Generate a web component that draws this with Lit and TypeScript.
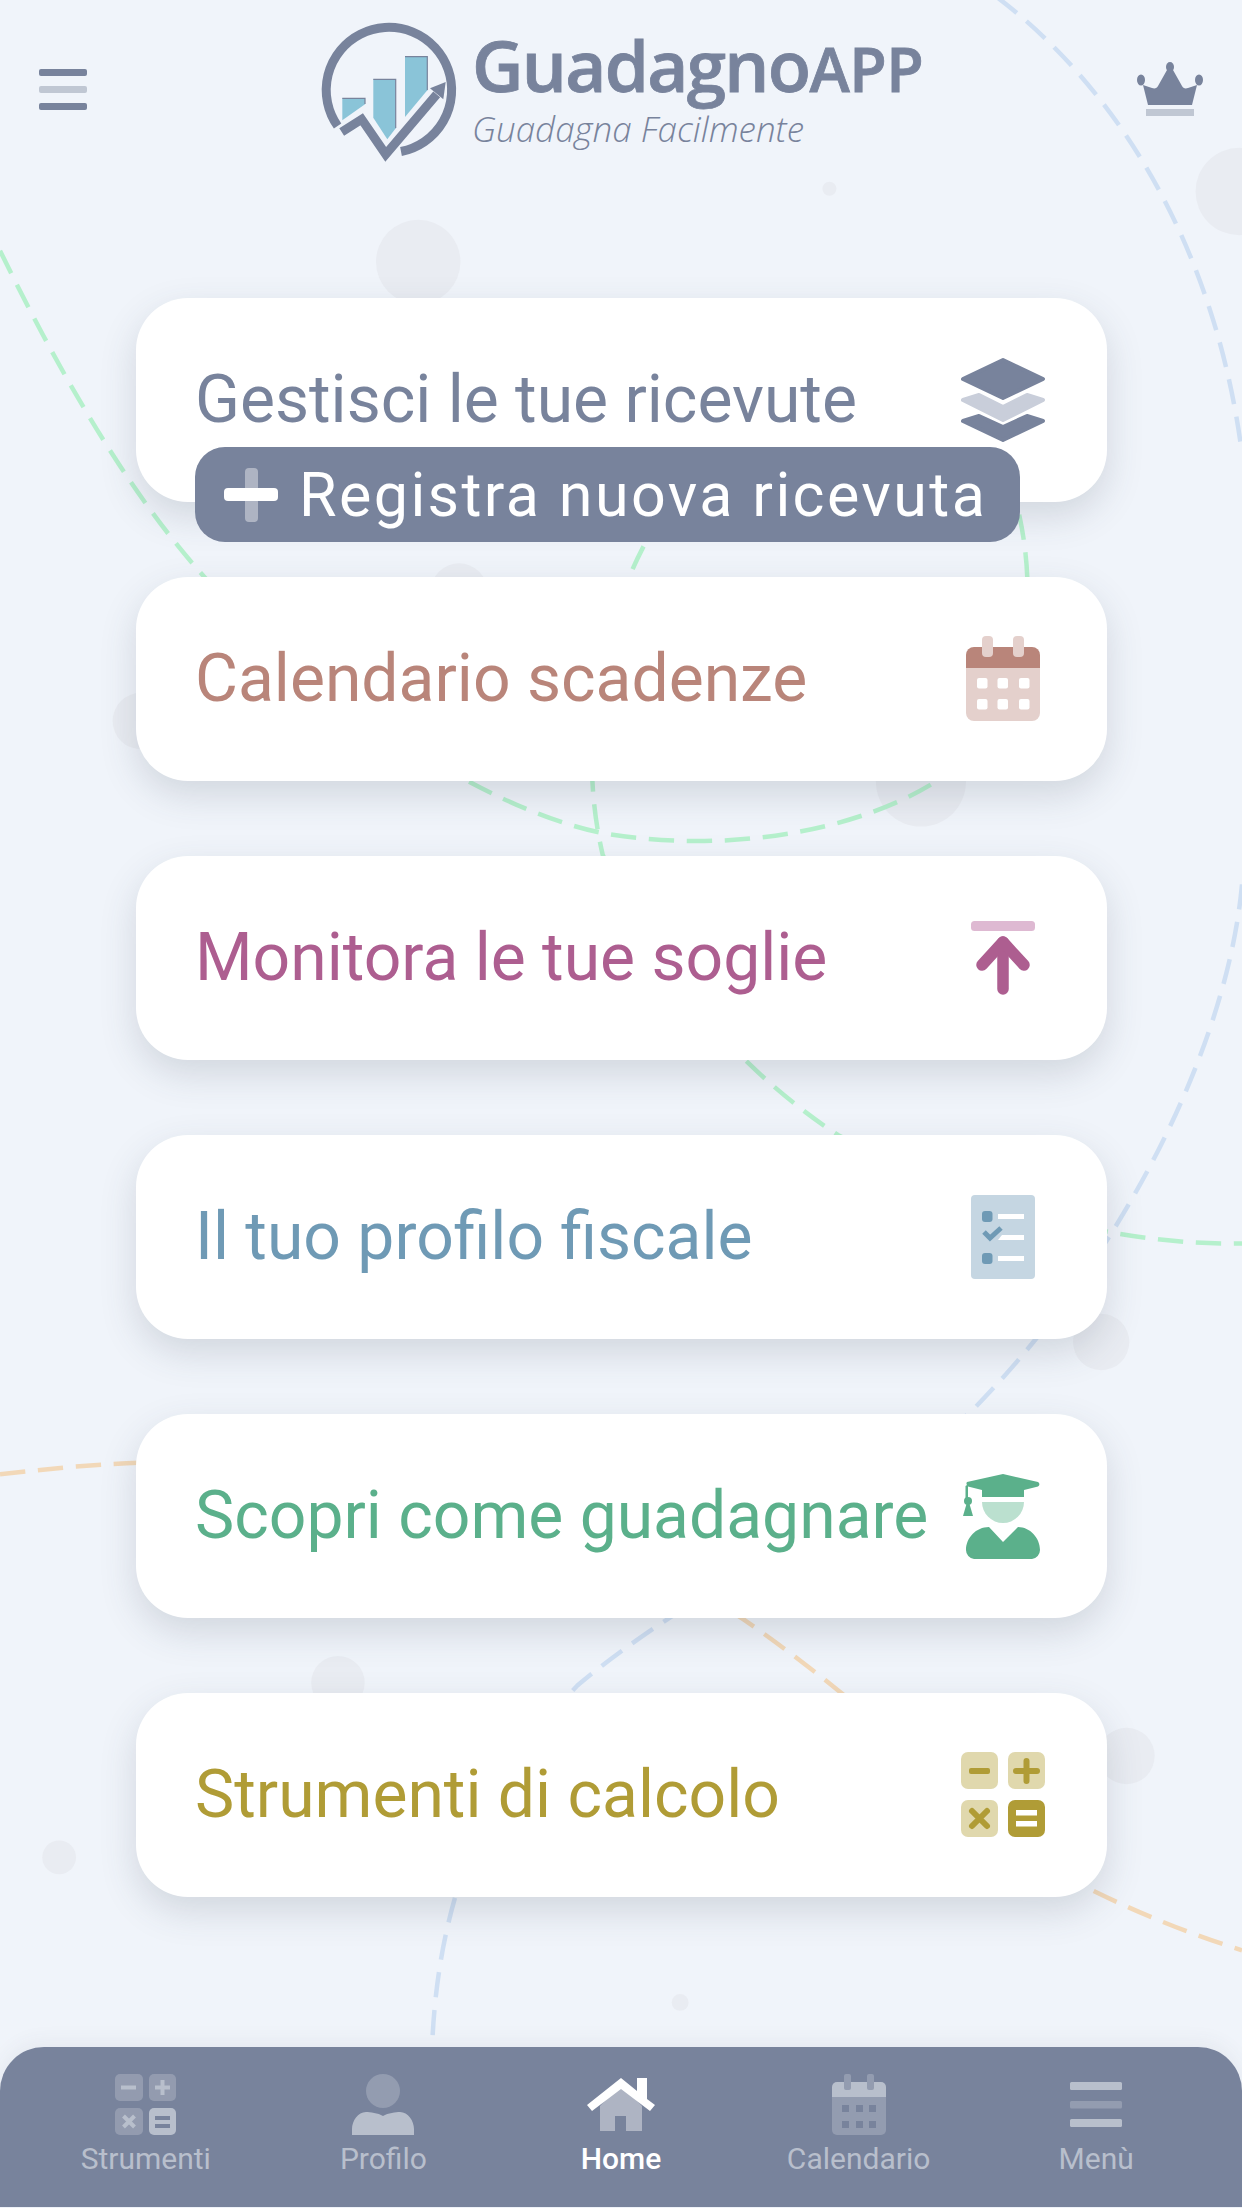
import { LitElement, html, css, svg } from "lit";
import { customElement } from "lit/decorators.js";

const BAR = "#78839c";

// each icon sits in a 90x90 box centred on the card's right side
const layersIcon = svg`
  <g stroke-width="4" stroke-linejoin="round">
    <path d="M45 5 85 24 45 43 5 24Z" fill="#78839c" stroke="#78839c"/>
    <path d="M21 40 45 52 69 40 85 45 45 65 5 45Z" fill="#c9ceda" stroke="#c9ceda"/>
    <path d="M21 61 45 72 69 61 85 66 45 85 5 66Z" fill="#78839c" stroke="#78839c"/>
  </g>
`;

const calendarIcon = svg`
  <path d="M8 30H82V79a8 8 0 0 1-8 8H16a8 8 0 0 1-8-8Z" fill="#e4d0cc"/>
  <path d="M16 13H74a8 8 0 0 1 8 8V34H8V21a8 8 0 0 1 8-8Z" fill="#b9857a"/>
  <rect x="24" y="2" width="11" height="21" rx="4" fill="#e4d0cc"/>
  <rect x="55" y="2" width="11" height="21" rx="4" fill="#e4d0cc"/>
  ${[19, 39.5, 61].flatMap((x) =>
    [44, 65].map((y) => svg`<rect x=${x} y=${y} width="10.5" height="10.5" rx="2" fill="#fff"/>`)
  )}
`;

const thresholdIcon = svg`
  <rect x="13" y="8" width="64" height="10" rx="3.5" fill="#deb9d2"/>
  <path d="M45 29V76" stroke="#ad5e90" stroke-width="11.5" stroke-linecap="round" fill="none"/>
  <path d="M24 52 45 29 66 52" stroke="#ad5e90" stroke-width="11.5" stroke-linecap="round" stroke-linejoin="round" fill="none"/>
`;

const profileIcon = svg`
  <rect x="13" y="3" width="64" height="84" rx="4" fill="#c5d6e2"/>
  <rect x="24" y="19" width="10.5" height="11" rx="3" fill="#6f9ab5"/>
  <rect x="40" y="22" width="26" height="5" fill="#fff"/>
  <path d="M44 43H66V48H40Z" fill="#fff"/>
  <path d="M26 40 32 46 43 36" stroke="#6f9ab5" stroke-width="5" fill="none"/>
  <rect x="24" y="61" width="10.5" height="11" rx="3" fill="#6f9ab5"/>
  <rect x="40" y="64" width="26" height="5" fill="#fff"/>
`;

const graduateIcon = svg`
  <path d="M45 3 80 11a2.5 2.5 0 0 1 0 4.500L66 19V26H24V19L10 15.500V30H7.500V15L9 14a2.500 2.500 0 0 1 0-3Z" fill="#5bb08b"/>
  <path d="M24 31H66A21 21 0 0 1 24 31Z" fill="#bbe0cf"/>
  <circle cx="10" cy="30" r="4" fill="#5bb08b"/>
  <path d="M8.500 33H11.500L15 45H5Z" fill="#5bb08b"/>
  <path d="M31 56 45 71 60 56C72 56 82 67 82 79A9 9 0 0 1 74 88H16A9 9 0 0 1 8 79C8 67 18 56 31 56Z" fill="#5bb08b"/>
`;

const calcIcon = svg`
  <rect x="3" y="2" width="37" height="37" rx="7" fill="#e0d8ad"/>
  <rect x="50" y="2" width="37" height="37" rx="7" fill="#e0d8ad"/>
  <rect x="3" y="50" width="37" height="37" rx="7" fill="#e0d8ad"/>
  <rect x="50" y="50" width="37" height="37" rx="7" fill="#b09c36"/>
  <rect x="11" y="18" width="21" height="6" rx="2" fill="#b09c36"/>
  <path d="M58 21H79M68.500 11V31" stroke="#b09c36" stroke-width="6" stroke-linecap="round"/>
  <path d="M14 61 29 76M29 61 14 76" stroke="#b09c36" stroke-width="6" stroke-linecap="round"/>
  <rect x="58" y="60" width="21" height="5.500" fill="#fff"/>
  <rect x="58" y="71" width="21" height="5.500" fill="#fff"/>
`;

const navCalc = svg`
  <rect x="0" y="0" width="28" height="27" rx="5" fill="#fff" opacity=".2"/>
  <rect x="34" y="0" width="27" height="27" rx="5" fill="#fff" opacity=".2"/>
  <rect x="0" y="34" width="28" height="27" rx="5" fill="#fff" opacity=".2"/>
  <rect x="34" y="34" width="27" height="27" rx="5" fill="#b8bfcc"/>
  <rect x="6" y="11.500" width="15" height="4" fill="#b8bfcc"/>
  <path d="M40 13.500H55M47.500 6V21" stroke="#b8bfcc" stroke-width="4"/>
  <path d="M8.500 42 19.500 53M19.500 42 8.500 53" stroke="#b8bfcc" stroke-width="4"/>
  <rect x="40" y="42" width="15" height="4" fill="${BAR}"/>
  <rect x="40" y="50" width="15" height="4" fill="${BAR}"/>
`;

const navProfile = svg`
  <circle cx="31" cy="17" r="17" fill="#939cb0"/>
  <path d="M14 38C18 38 26 39 31 42 36 39 44 38 48 38 56 38 62 47 62 55V61H0V55C0 47 6 38 14 38Z" fill="#b8bfcc"/>
`;

const navHome = svg`
  <path d="M31 10 10 32V57H25V42H36V57H52V32Z" fill="#fff" opacity=".4"/>
  <path d="M-3 31 31 4 47 17V4H57V25L65 31 60 37 31 15 2 37Z" fill="#fff"/>
`;

const navCalendar = svg`
  <path d="M4 20H58V56a5 5 0 0 1-5 5H9a5 5 0 0 1-5-5Z" fill="#939cb0"/>
  <path d="M9 8H53a5 5 0 0 1 5 5V23H4V13a5 5 0 0 1 5-5Z" fill="#b8bfcc"/>
  <rect x="16" y="0" width="7" height="16" rx="2" fill="#939cb0"/>
  <rect x="39" y="0" width="7" height="16" rx="2" fill="#939cb0"/>
  ${[14, 28, 41].flatMap((x) =>
    [31, 47].map((y) => svg`<rect x=${x} y=${y} width="7" height="7" fill=${BAR}/>`)
  )}
`;

const navMenu = svg`
  <rect x="5" y="8" width="52" height="8" rx="1.500" fill="#b8bfcc"/>
  <rect x="5" y="27" width="52" height="7.500" rx="1.500" fill="#939cb0"/>
  <rect x="5" y="45" width="52" height="8" rx="1.500" fill="#b8bfcc"/>
`;

const CARDS = [
  { label: "Gestisci le tue ricevute", color: "#78839c", icon: layersIcon },
  { label: "Calendario scadenze", color: "#b9857a", icon: calendarIcon },
  { label: "Monitora le tue soglie", color: "#ad5e90", icon: thresholdIcon },
  { label: "Il tuo profilo fiscale", color: "#6f9ab5", icon: profileIcon },
  { label: "Scopri come guadagnare", color: "#5bb08b", icon: graduateIcon },
  { label: "Strumenti di calcolo", color: "#b09c36", icon: calcIcon },
];

const NAV = [
  { label: "Strumenti", icon: navCalc, active: false },
  { label: "Profilo", icon: navProfile, active: false },
  { label: "Home", icon: navHome, active: true },
  { label: "Calendario", icon: navCalendar, active: false },
  { label: "Menù", icon: navMenu, active: false },
];

// [cx, cy, r] in the 882 wide backdrop
const BLOBS = [
  [297, 186, 30], [880, 136, 31], [589, 134, 5], [326, 420, 20], [100, 512, 20],
  [654, 555, 32], [782, 953, 20], [240, 1195, 19], [800, 1247, 20], [42, 1319, 12], [483, 1422, 6],
];

const ARCS = [
  { d: "M708 -2C790 60 862 170 882 322", color: "#cfdff3" },
  { d: "M882 628C872 740 800 890 690 1002C600 1080 490 1130 410 1197C350 1260 312 1340 307 1450", color: "#cfdff3" },
  { d: "M0 178C40 260 88 345 141 405C210 485 340 575 430 592C540 610 650 580 695 530C735 480 735 410 722 358", color: "#b5f0cc" },
  { d: "M457 388C425 450 410 530 428 607C465 690 525 760 595 806C680 850 780 885 882 883", color: "#b5f0cc" },
  { d: "M0 1047C60 1040 110 1036 170 1040C330 1050 453 1100 528 1150C615 1210 690 1285 765 1337C810 1360 850 1375 882 1385", color: "#f2d8b8" },
];

@customElement("app-root")
export class AppRoot extends LitElement {
  static styles = css`
    :host {
      display: flex;
      flex-direction: column;
      position: relative;
      width: 1242px;
      height: 2208px;
      overflow: hidden;
      background: #f0f4fa;
      font-family: Roboto, "Liberation Sans", sans-serif;
    }

    .backdrop {
      position: absolute;
      inset: 0;
      width: 1242px;
      height: 2208px;
    }

    header,
    main,
    nav {
      position: relative;
    }

    header {
      display: flex;
      align-items: center;
      height: 178px;
      padding: 0 37px 0 39px;
    }

    .menu {
      display: flex;
      flex-direction: column;
      gap: 10px;
      width: 48px;
    }

    .menu span {
      height: 7px;
      border-radius: 2px;
      background: #78839c;
    }

    .menu span:nth-child(2) {
      background: #c0c7d3;
    }

    .logo {
      display: flex;
      align-items: center;
      gap: 12px;
      margin-left: 233px;
      flex: 1;
    }

    .logo svg {
      width: 140px;
      height: 145px;
      margin-top: 8px;
    }

    .brand {
      color: #78839c;
      font-family: "Open Sans", sans-serif;
      margin-top: -8px;
    }

    .name {
      font-size: 71px;
      font-weight: 600;
      line-height: 84px;
      letter-spacing: -1.7px;
      -webkit-text-stroke: 0.8px #78839c;
    }

    .name span {
      font-size: 61px;
      letter-spacing: -0.5px;
    }

    .tag {
      font-size: 35px;
      font-style: italic;
      font-weight: 300;
      line-height: 36px;
    }

    .crown {
      width: 70px;
      height: 60px;
    }

    main {
      flex: 1;
      display: flex;
      flex-direction: column;
      gap: 75px;
      padding: 120px 135px 0 136px;
    }

    .card {
      position: relative;
      display: flex;
      align-items: center;
      justify-content: space-between;
      height: 204px;
      padding: 0 59px;
      border-radius: 52px;
      background: #fff;
      box-shadow: 0 14px 36px rgba(60, 70, 90, 0.17);
      font-size: 66px;
    }

    .label {
      margin-top: -1px;
    }

    .card svg {
      width: 90px;
      height: 90px;
      overflow: visible;
      flex: none;
    }

    .add {
      position: absolute;
      left: 59px;
      top: 149px;
      display: flex;
      align-items: center;
      gap: 21px;
      width: 825px;
      height: 95px;
      box-sizing: border-box;
      padding-left: 29px;
      border-radius: 30px;
      background: #78839c;
      color: #fff;
      font-size: 61px;
      letter-spacing: 2.4px;
    }

    .add svg {
      width: 54px;
      height: 54px;
    }

    nav {
      display: flex;
      height: 160px;
      margin-bottom: 1px;
      padding: 27px 27px 0;
      box-sizing: border-box;
      border-radius: 44px 44px 0 0;
      background: #78839c;
      box-shadow: 0 -6px 20px rgba(60, 70, 90, 0.06);
    }

    .tab {
      flex: 1;
      display: flex;
      flex-direction: column;
      align-items: center;
      gap: 8px;
      color: #b8bfcc;
      font-size: 30px;
      line-height: 32px;
    }

    .tab.active {
      color: #fff;
      font-weight: 500;
    }

    .tab svg {
      width: 62px;
      height: 61px;
      overflow: visible;
    }
  `;

  private renderBackdrop() {
    return html`
      <svg class="backdrop" viewBox="0 0 882 1568" fill="none">
        ${BLOBS.map(([cx, cy, r]) => svg`<circle cx=${cx} cy=${cy} r=${r} fill="#e9ecf2"/>`)}
        ${ARCS.map(
          (a) => svg`<path d=${a.d} stroke=${a.color} stroke-width="3.2" stroke-dasharray="18 9"/>`
        )}
      </svg>
    `;
  }

  private renderLogo() {
    return html`
      <div class="logo">
        <svg viewBox="320 20 140 145" fill="none">
          <path d="M337.600 125A62.700 62.700 0 1 1 401 150.500" stroke="#78839c" stroke-width="9"/>
          <path d="M341.700 131 361.700 118.300 385.700 153.300 436.700 93.300" stroke="#78839c" stroke-width="9"/>
          <path d="M445.700 81 430 87.300 443.300 98.300Z" fill="#78839c"/>
          <path d="M342.300 97.300H365V103.300L342.300 119.300Z" fill="#8ac4d8"/>
          <path d="M373.300 78.300H395.700V127.300L387.300 138.300 373.300 116.700Z" fill="#8ac4d8"/>
          <path d="M405 55.700H427.300V89.300L405 116Z" fill="#8ac4d8"/>
          <path d="M342.300 97.300H365V103M373.300 78.300H395.700V127M405 55.700H427.300V89" stroke="#78839c" stroke-width="1.200"/>
        </svg>
        <div class="brand">
          <div class="name">Guadagno<span>APP</span></div>
          <div class="tag">Guadagna Facilmente</div>
        </div>
      </div>
    `;
  }

  render() {
    return html`
      ${this.renderBackdrop()}
      <header>
        <div class="menu"><span></span><span></span><span></span></div>
        ${this.renderLogo()}
        <svg class="crown" viewBox="0 0 70 60" fill="#78839c">
          <ellipse cx="35" cy="8" rx="4" ry="5"/>
          <ellipse cx="6" cy="21" rx="4" ry="5.500"/>
          <ellipse cx="64" cy="21" rx="4" ry="5.500"/>
          <path d="M8 26 13 46H57L62 26 53 29C50 30 48 29 47 27L38 11H32L23 27C22 29 20 30 17 29Z"/>
          <rect x="11" y="50" width="48" height="7" fill="#c0c7d3"/>
        </svg>
      </header>
      <main>
        ${CARDS.map(
          (c, i) => html`
            <div class="card" style="color: ${c.color}">
              <span class="label">${c.label}</span>
              <svg viewBox="0 0 90 90">${c.icon}</svg>
              ${i === 0
                ? html`
                    <div class="add">
                      <svg viewBox="0 0 54 54">
                        <rect x="21" y="0" width="13" height="54" rx="4" fill="#fff" opacity=".4"/>
                        <rect x="0" y="20" width="54" height="13" rx="4" fill="#fff"/>
                      </svg>
                      Registra nuova ricevuta
                    </div>
                  `
                : ""}
            </div>
          `
        )}
      </main>
      <nav>
        ${NAV.map(
          (n) => html`
            <div class="tab ${n.active ? "active" : ""}">
              <svg viewBox="0 0 62 61">${n.icon}</svg>
              <span>${n.label}</span>
            </div>
          `
        )}
      </nav>
    `;
  }
}
